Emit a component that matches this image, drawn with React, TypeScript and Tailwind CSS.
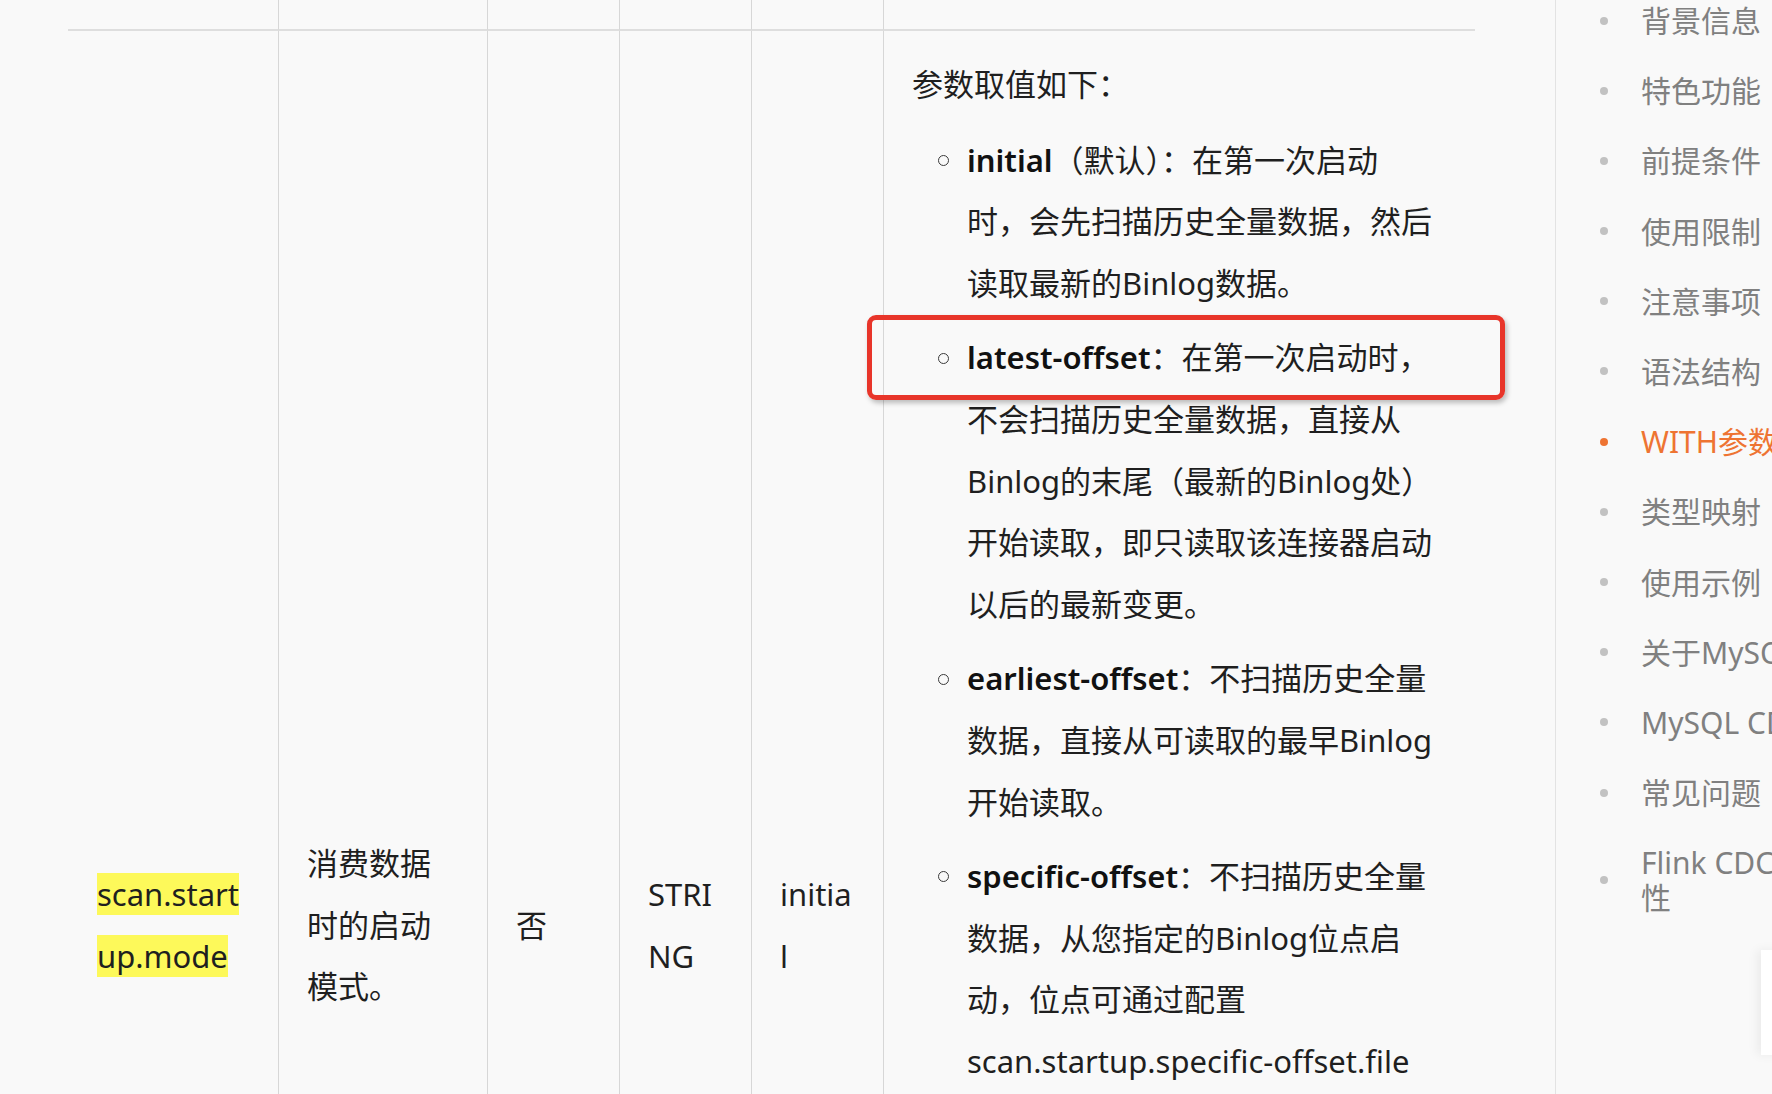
import React from 'react';

const toc = [
  { label: '背景信息' },
  { label: '特色功能' },
  { label: '前提条件' },
  { label: '使用限制' },
  { label: '注意事项' },
  { label: '语法结构' },
  { label: 'WITH参数', active: true },
  { label: '类型映射' },
  { label: '使用示例' },
  { label: '关于MySQL CDC DataStream API' },
  { label: 'MySQL CDC源表分片读取' },
  { label: '常见问题' },
  { label: ['Flink CDC社区版本兼容', '性'] },
];

const modes: { term: string; lines: string[] }[] = [
  {
    term: 'initial',
    lines: ['（默认）：在第一次启动', '时，会先扫描历史全量数据，然后', '读取最新的Binlog数据。'],
  },
  {
    term: 'latest-offset',
    lines: [
      '：在第一次启动时，',
      '不会扫描历史全量数据，直接从',
      'Binlog的末尾（最新的Binlog处）',
      '开始读取，即只读取该连接器启动',
      '以后的最新变更。',
    ],
  },
  {
    term: 'earliest-offset',
    lines: ['：不扫描历史全量', '数据，直接从可读取的最早Binlog', '开始读取。'],
  },
  {
    term: 'specific-offset',
    lines: [
      '：不扫描历史全量',
      '数据，从您指定的Binlog位点启',
      '动，位点可通过配置',
      'scan.startup.specific-offset.file',
      'name和scan.startup.specific-',
      'offset.pos参数指定，也可通过',
      'scan.startup.specific-offset.gtid-',
      'set参数指定GTID集合。',
    ],
  },
  {
    term: 'timestamp',
    lines: ['：不扫描历史全量', '数据，从指定的时间戳开始读取', 'Binlog。时间戳通过', 'scan.startup.timestamp-millis', '指定，单位为毫秒。'],
  },
];

function Cell({ children, first }: { children?: React.ReactNode; first?: boolean }) {
  return (
    <div className={first ? 'pl-[29px]' : 'border-l border-[#d7d7d7] pl-[28px]'}>{children}</div>
  );
}

export default function App() {
  return (
    <div className="relative h-[1094px] w-[1772px] overflow-hidden bg-[#f9f9f9] font-['Noto_Sans','Noto_Sans_CJK_SC',sans-serif] text-[#1f1f1f]">
      <div className="flex h-full">
        {/* 正文表格 */}
        <main className="w-[1556px] shrink-0 border-r border-[#e3e3e3] pl-[68px]">
          <div className="grid w-[1407px] grid-cols-[210px_209px_132px_132px_132px_592px] grid-rows-[31px_1789px] text-[31px] leading-[61.6px]">
            {/* 上一行的末尾 */}
            {[0, 1, 2, 3, 4, 5].map((i) => (
              <div
                key={i}
                className={
                  i === 0
                    ? 'border-b-2 border-[#dedede]'
                    : 'border-b-2 border-l border-[#dedede] border-l-[#d7d7d7]'
                }
              />
            ))}

            <Cell first>
              <div className="flex h-full flex-col justify-center">
                <div>
                  <span className="bg-[#fdf95a]">scan.start</span>
                </div>
                <div>
                  <span className="bg-[#fdf95a]">up.mode</span>
                </div>
              </div>
            </Cell>
            <Cell>
              <div className="flex h-full flex-col justify-center">
                <div>消费数据</div>
                <div>时的启动</div>
                <div>模式。</div>
              </div>
            </Cell>
            <Cell>
              <div className="flex h-full flex-col justify-center">否</div>
            </Cell>
            <Cell>
              <div className="flex h-full flex-col justify-center">
                <div>STRI</div>
                <div>NG</div>
              </div>
            </Cell>
            <Cell>
              <div className="flex h-full flex-col justify-center">
                <div>initia</div>
                <div>l</div>
              </div>
            </Cell>
            <Cell>
              <div className="pt-[23px]">
                <p>参数取值如下：</p>
                <ul className="mt-[14px] flex flex-col gap-[13px]">
                  {modes.map((m) => (
                    <li key={m.term} className="flex">
                      <span className="flex h-[61.6px] w-[55px] shrink-0 items-center justify-end pr-[18px]">
                        <span className="h-[11px] w-[11px] rounded-full border-[1.5px] border-[#3a3a3a]" />
                      </span>
                      <div className="whitespace-nowrap">
                        {m.lines.map((line, i) => (
                          <div key={i}>
                            {i === 0 && <b className="font-semibold text-[#111]">{m.term}</b>}
                            {line}
                          </div>
                        ))}
                      </div>
                    </li>
                  ))}
                </ul>
              </div>
            </Cell>
          </div>
        </main>

        {/* 右侧目录 */}
        <aside className="min-w-0 flex-1 overflow-hidden pl-[44px] pt-[3px]">
          <ul className="flex flex-col gap-[35.2px] text-[30px] leading-[35px]">
            {toc.map((item, i) => (
              <li key={i} className="flex items-center gap-[33px] whitespace-nowrap">
                <span
                  className={
                    item.active
                      ? 'h-[8px] w-[8px] shrink-0 rounded-full bg-[#ee7432]'
                      : 'h-[8px] w-[8px] shrink-0 rounded-full bg-[#c2c2c2]'
                  }
                />
                <span className={item.active ? 'text-[#ee7432]' : 'text-[#808080]'}>
                  {Array.isArray(item.label) ? (
                    <>
                      {item.label[0]}
                      <br />
                      {item.label[1]}
                    </>
                  ) : (
                    item.label
                  )}
                </span>
              </li>
            ))}
          </ul>
        </aside>
      </div>

      {/* 标注框 */}
      <div className="absolute left-[867px] top-[315px] h-[85px] w-[638px] rounded-[9px] border-[5px] border-[#e8352a] shadow-[2px_3px_5px_rgba(0,0,0,0.25)]" />

      {/* 右下角浮动面板 */}
      <div className="absolute left-[1761px] top-[950px] h-[105px] w-[80px] bg-white shadow-[-4px_0_10px_rgba(0,0,0,0.06)]" />
    </div>
  );
}
